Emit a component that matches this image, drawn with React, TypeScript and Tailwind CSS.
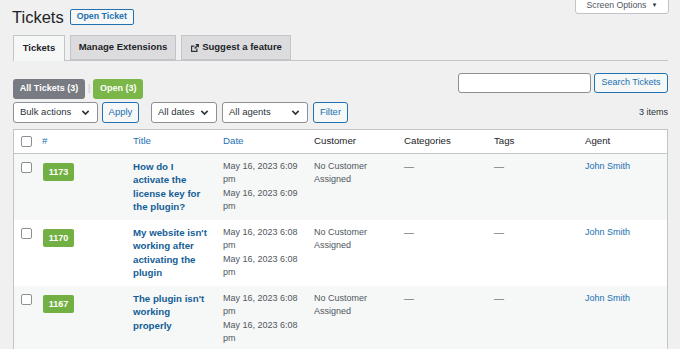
import React from "react";

const tickets = [
  { id: "1173", title: "How do I activate the license key for the plugin?", time: "6:09" },
  { id: "1170", title: "My website isn't working after activating the plugin", time: "6:08" },
  { id: "1167", title: "The plugin isn't working properly", time: "6:08" },
];

function Chevron() {
  return (
    <svg width="9" height="9" viewBox="0 0 10 10" className="text-[#2c3338]">
      <path d="M1.5 3.2 5 6.7l3.5-3.5" fill="none" stroke="currentColor" strokeWidth="1.8" />
    </svg>
  );
}

function ExternalIcon() {
  return (
    <svg width="10" height="10" viewBox="0 0 10 10" className="text-[#2c3338]">
      <path d="M1 2.5h3.5v1.2H2.2v4.1h4.1V5.5h1.2V9H1z" fill="currentColor" />
      <path d="M5.2 1H9v3.8L7.6 3.4 5.1 5.9 4.1 4.9l2.5-2.5z" fill="currentColor" />
    </svg>
  );
}

function Select({ label, width }: { label: string; width: string }) {
  return (
    <div className={`${width} h-[21px] flex items-center justify-between pl-[6px] pr-[7px] bg-white border border-[#8c8f94] rounded-[3px] text-[9.5px] text-[#2c3338]`}>
      <span>{label}</span>
      <Chevron />
    </div>
  );
}

function Checkbox() {
  return <span className="block w-[11px] h-[11px] bg-white border border-[#8c8f94] rounded-[2px]" />;
}

export default function App() {
  return (
    <div className="relative min-h-screen bg-[#f0f0f1] pl-[13px] pr-[12px] font-['Liberation_Sans',Arial,sans-serif] overflow-hidden">
      <div className="absolute right-[11px] top-[-3px] w-[94px] h-[17px] bg-white border border-[#c3c4c7] rounded-b-[3px] flex items-center justify-center gap-[5px] text-[8.7px] text-[#50575e]">
        <span>Screen Options</span>
        <span className="text-[6px] text-[#2c3338]">▼</span>
      </div>

      <div className="flex items-center gap-[6px] pt-[9px] -ml-[1px]">
        <h1 className="text-[16.5px] leading-[16px] text-[#1d2327]">Tickets</h1>
        <span className="h-[16px] px-[6px] flex items-center border border-[#2271b1] rounded-[2px] bg-[#f6f7f7] text-[8.8px] font-bold text-[#2271b1]">
          Open Ticket
        </span>
      </div>

      <div className="mt-[10px] flex gap-[5px] border-b border-[#c3c4c7] h-[26px] text-[9.5px] font-bold text-[#1d2327]">
        <div className="w-[52px] h-[26px] flex items-center justify-center bg-[#f6f7f7] border border-b-0 border-[#c3c4c7]">Tickets</div>
        <div className="w-[106px] h-[25px] flex items-center justify-center bg-[#dcdcde] border border-[#c3c4c7]">Manage Extensions</div>
        <div className="w-[110px] h-[25px] flex items-center justify-center gap-[2px] bg-[#dcdcde] border border-[#c3c4c7]">
          <ExternalIcon />
          <span>Suggest a feature</span>
        </div>
      </div>

      <div className="mt-[12px] flex items-start justify-between">
        <div className="mt-[6px] flex items-center gap-[3px] text-[9px] font-bold text-white">
          <span className="h-[20px] w-[72px] flex items-center justify-center rounded-[3px] bg-[#787c82]">All Tickets (3)</span>
          <span className="text-[#c3c4c7] font-normal">|</span>
          <span className="h-[20px] w-[50px] flex items-center justify-center rounded-[3px] bg-[#7ab648]">Open (3)</span>
        </div>
        <div className="flex items-center gap-[3px]">
          <div className="w-[133px] h-[20px] bg-white border border-[#8c8f94] rounded-[3px]" />
          <span className="h-[20px] w-[74px] flex items-center justify-center border border-[#2271b1] rounded-[3px] bg-[#f6f7f7] text-[9px] text-[#2271b1]">
            Search Tickets
          </span>
        </div>
      </div>

      <div className="mt-[3px] flex items-center">
        <Select label="Bulk actions" width="w-[85px]" />
        <span className="ml-[4px] h-[21px] w-[37px] flex items-center justify-center border border-[#2271b1] rounded-[3px] bg-[#f6f7f7] text-[9.5px] text-[#2271b1]">Apply</span>
        <div className="ml-[12px]"><Select label="All dates" width="w-[66px]" /></div>
        <div className="ml-[5px]"><Select label="All agents" width="w-[86px]" /></div>
        <span className="ml-[5px] h-[21px] w-[35px] flex items-center justify-center border border-[#2271b1] rounded-[3px] bg-[#f6f7f7] text-[9.5px] text-[#2271b1]">Filter</span>
        <span className="ml-auto text-[9px] text-[#2c3338]">3 items</span>
      </div>

      <div className="mt-[6px] border border-[#c3c4c7] bg-white">
        <table className="w-full table-fixed border-collapse">
          <colgroup>
            <col className="w-[23px]" />
            <col className="w-[88px]" />
            <col className="w-[90px]" />
            <col className="w-[91px]" />
            <col className="w-[90px]" />
            <col className="w-[90px]" />
            <col className="w-[91px]" />
            <col />
          </colgroup>
          <thead>
            <tr className="h-[23px] border-b border-[#c3c4c7] text-left text-[9.7px]">
              <th className="pl-[7px] font-normal"><Checkbox /></th>
              <th className="pl-[5px] font-normal text-[#2271b1]">#</th>
              <th className="pl-[8px] font-normal text-[#2271b1]">Title</th>
              <th className="pl-[8px] font-normal text-[#2271b1]">Date</th>
              <th className="pl-[8px] font-normal text-[#1d2327]">Customer</th>
              <th className="pl-[8px] font-normal text-[#1d2327]">Categories</th>
              <th className="pl-[8px] font-normal text-[#1d2327]">Tags</th>
              <th className="pl-[8px] font-normal text-[#1d2327]">Agent</th>
            </tr>
          </thead>
          <tbody>
            {tickets.map((t, i) => (
              <tr key={t.id} className={i % 2 === 0 ? "bg-[#f6f7f7]" : "bg-white"}>
                <td className="pl-[7px] pt-[8px] align-top"><Checkbox /></td>
                <td className="pl-[6px] pt-[4px] align-top">
                  <span className="inline-flex h-[18px] w-[31px] items-center justify-center rounded-[2px] bg-[#72b043] text-[9px] font-bold text-white">
                    {t.id}
                  </span>
                </td>
                <td className="pl-[8px] pr-[6px] py-[6px] align-top text-[9.7px] leading-[13.5px] font-bold text-[#135e96]">{t.title}</td>
                <td className="pl-[8px] pr-[4px] py-[6px] align-top text-[9px] leading-[13.5px] text-[#50575e]">
                  <div>May 16, 2023 {t.time} pm</div>
                  <div>May 16, 2023 {t.time} pm</div>
                </td>
                <td className="pl-[8px] pr-[4px] py-[6px] align-top text-[9px] leading-[13.5px] text-[#50575e]">No Customer Assigned</td>
                <td className="pl-[8px] py-[6px] align-top text-[10px] leading-[13.5px] text-[#787c82]">—</td>
                <td className="pl-[8px] py-[6px] align-top text-[10px] leading-[13.5px] text-[#787c82]">—</td>
                <td className="pl-[8px] py-[6px] align-top text-[9px] leading-[13.5px] text-[#2271b1]">John Smith</td>
              </tr>
            ))}
          </tbody>
        </table>
      </div>
    </div>
  );
}
